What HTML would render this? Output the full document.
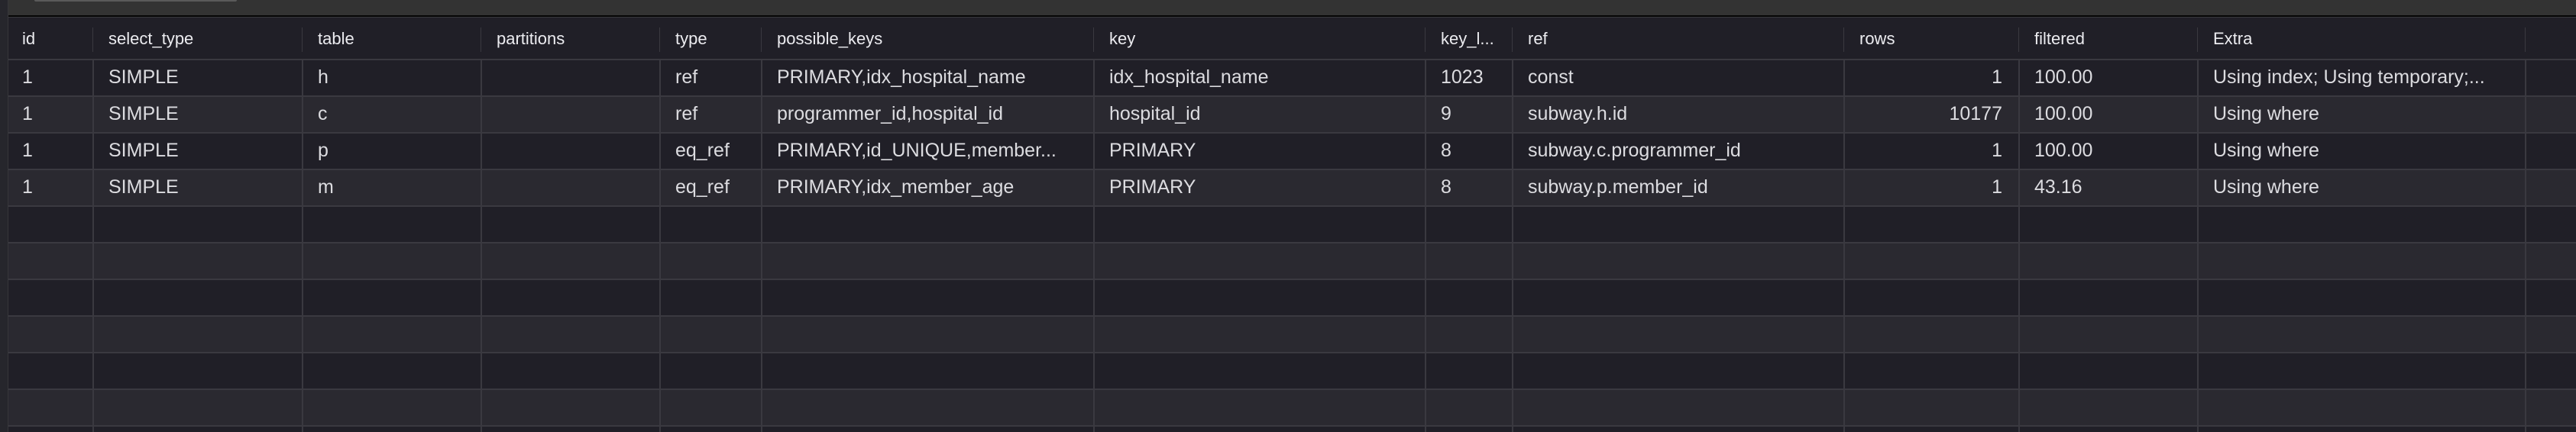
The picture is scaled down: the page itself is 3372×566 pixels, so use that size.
<!DOCTYPE html>
<html><head><meta charset="utf-8"><style>
html,body{margin:0;padding:0;width:3372px;height:566px;overflow:hidden;background:#201f27;font-family:"Liberation Sans",sans-serif;}
.abs{position:absolute;}
.t{position:absolute;white-space:nowrap;color:#dcdce0;}
.h{font-size:22px;color:#ececf0;}
.d{font-size:25px;}
</style></head><body>
<div class="abs" style="left:0;top:0;width:3372px;height:20px;background:#333333"></div>
<div class="abs" style="left:45px;top:0;width:265px;height:2px;background:#5a5a5a;border-radius:0 0 3px 3px"></div>
<div class="abs" style="left:0;top:20px;width:3372px;height:2px;background:#050505"></div>
<div class="abs" style="left:0;top:22px;width:3372px;height:1px;background:#3a3a3e"></div>
<div class="abs" style="left:0;top:0;width:10px;height:566px;background:#26262c"></div>
<div class="abs" style="left:10px;top:0;width:1px;height:566px;background:#36363a"></div>
<div id="g"></div>
<script>
(function(){
var seps=[121,395,629,863,996,1431,1865,1979,2413,2642,2876,3305];
var starts=[11,121,395,629,863,996,1431,1865,1979,2413,2642,2876];
var html='';
for(var i=0;i<10;i++){
 var ty=79+48*i;
 html+='<div class="abs" style="left:11px;top:'+ty+'px;width:3361px;height:48px;background:'+(i%2?'#2a2930':'#201f27')+'"></div>';
 html+='<div class="abs" style="left:11px;top:'+(ty+46)+'px;width:3361px;height:2px;background:#3a3940"></div>';
}
html+='<div class="abs" style="left:11px;top:77px;width:3361px;height:2px;background:#3a3940"></div>';
seps.forEach(function(x){
 html+='<div class="abs" style="left:'+x+'px;top:36px;width:1px;height:32px;background:#3a3940"></div>';
 html+='<div class="abs" style="left:'+x+'px;top:79px;width:2px;height:487px;background:#3a3940"></div>';
});
var hdr=['id','select_type','table','partitions','type','possible_keys','key','key_l...','ref','rows','filtered','Extra'];
hdr.forEach(function(s,j){
 var x=j==0?29:starts[j]+21;
 html+='<div class="t h" style="left:'+x+'px;top:38px">'+s+'</div>';
});
var data=[
['1','SIMPLE','h','','ref','PRIMARY,idx_hospital_name','idx_hospital_name','1023','const','1','100.00','Using index; Using temporary;...'],
['1','SIMPLE','c','','ref','programmer_id,hospital_id','hospital_id','9','subway.h.id','10177','100.00','Using where'],
['1','SIMPLE','p','','eq_ref','PRIMARY,id_UNIQUE,member...','PRIMARY','8','subway.c.programmer_id','1','100.00','Using where'],
['1','SIMPLE','m','','eq_ref','PRIMARY,idx_member_age','PRIMARY','8','subway.p.member_id','1','43.16','Using where']];
data.forEach(function(r,i){
 var ty=79+48*i+8;
 r.forEach(function(s,j){
  if(!s)return;
  if(j==9){
   html+='<div class="t d" style="right:'+(3372-2621)+'px;top:'+ty+'px">'+s+'</div>';
  } else {
   var x=j==0?29:starts[j]+21;
   html+='<div class="t d" style="left:'+x+'px;top:'+ty+'px">'+s+'</div>';
  }
 });
});
document.getElementById('g').innerHTML=html;
})();
</script>
</body></html>
